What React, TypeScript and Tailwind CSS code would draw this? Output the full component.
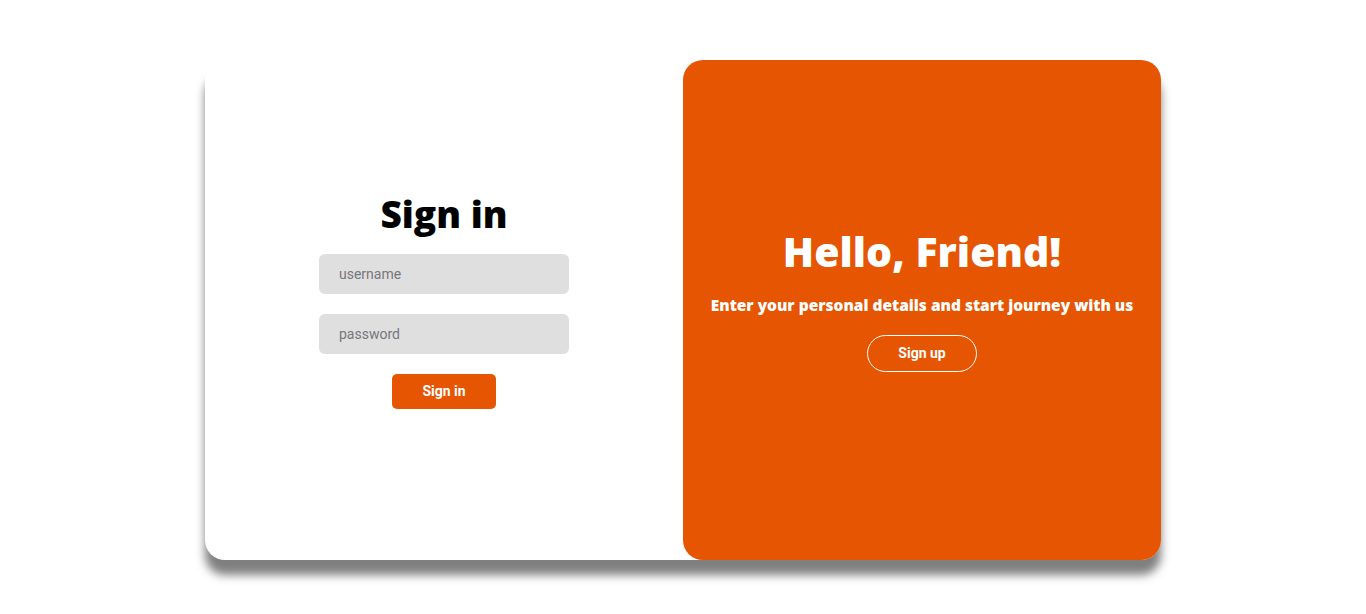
export default function App() {
    return (
        <div className="min-h-screen bg-white flex justify-center pt-[60px]">
            <div className="flex w-[956px] h-[500px] bg-white rounded-[20px] shadow-[0_15px_10px_rgba(0,0,0,0.5)]">
                <div className="w-[478px] flex flex-col items-center justify-center pb-[20px]">
                    <h1 className="font-['Open_Sans',sans-serif] font-extrabold text-[37px] leading-[44px] text-black mb-[18px]">Sign in</h1>
                    <input
                        placeholder="username"
                        className="w-[250px] h-[40px] rounded-[6px] bg-[#e0dfe0] pl-[20px] font-['Roboto',sans-serif] text-[14px] text-black placeholder:text-[#77767a] outline-none"
                    />
                    <input
                        placeholder="password"
                        className="w-[250px] h-[40px] rounded-[6px] bg-[#e0dfe0] pl-[20px] mt-[20px] font-['Roboto',sans-serif] text-[14px] text-black placeholder:text-[#77767a] outline-none"
                    />
                    <button className="mt-[20px] w-[104px] h-[35px] rounded-[5px] bg-[#e65502] text-white font-['Roboto',sans-serif] font-bold text-[14px]">Sign in</button>
                </div>
                <div className="w-[478px] bg-[#e65502] rounded-[20px] flex flex-col items-center justify-center pb-[22px]">
                    <h1 className="font-['Open_Sans',sans-serif] font-extrabold text-[41px] leading-[50px] text-white">Hello, Friend!</h1>
                    <p className="mt-[19px] font-['Open_Sans',sans-serif] font-extrabold text-[15.5px] leading-[21px] text-white">Enter your personal details and start journey with us</p>
                    <button className="mt-[19px] w-[110px] h-[37px] rounded-full border border-white text-white font-['Roboto',sans-serif] font-bold text-[14px]">Sign up</button>
                </div>
            </div>
        </div>
    )
}
